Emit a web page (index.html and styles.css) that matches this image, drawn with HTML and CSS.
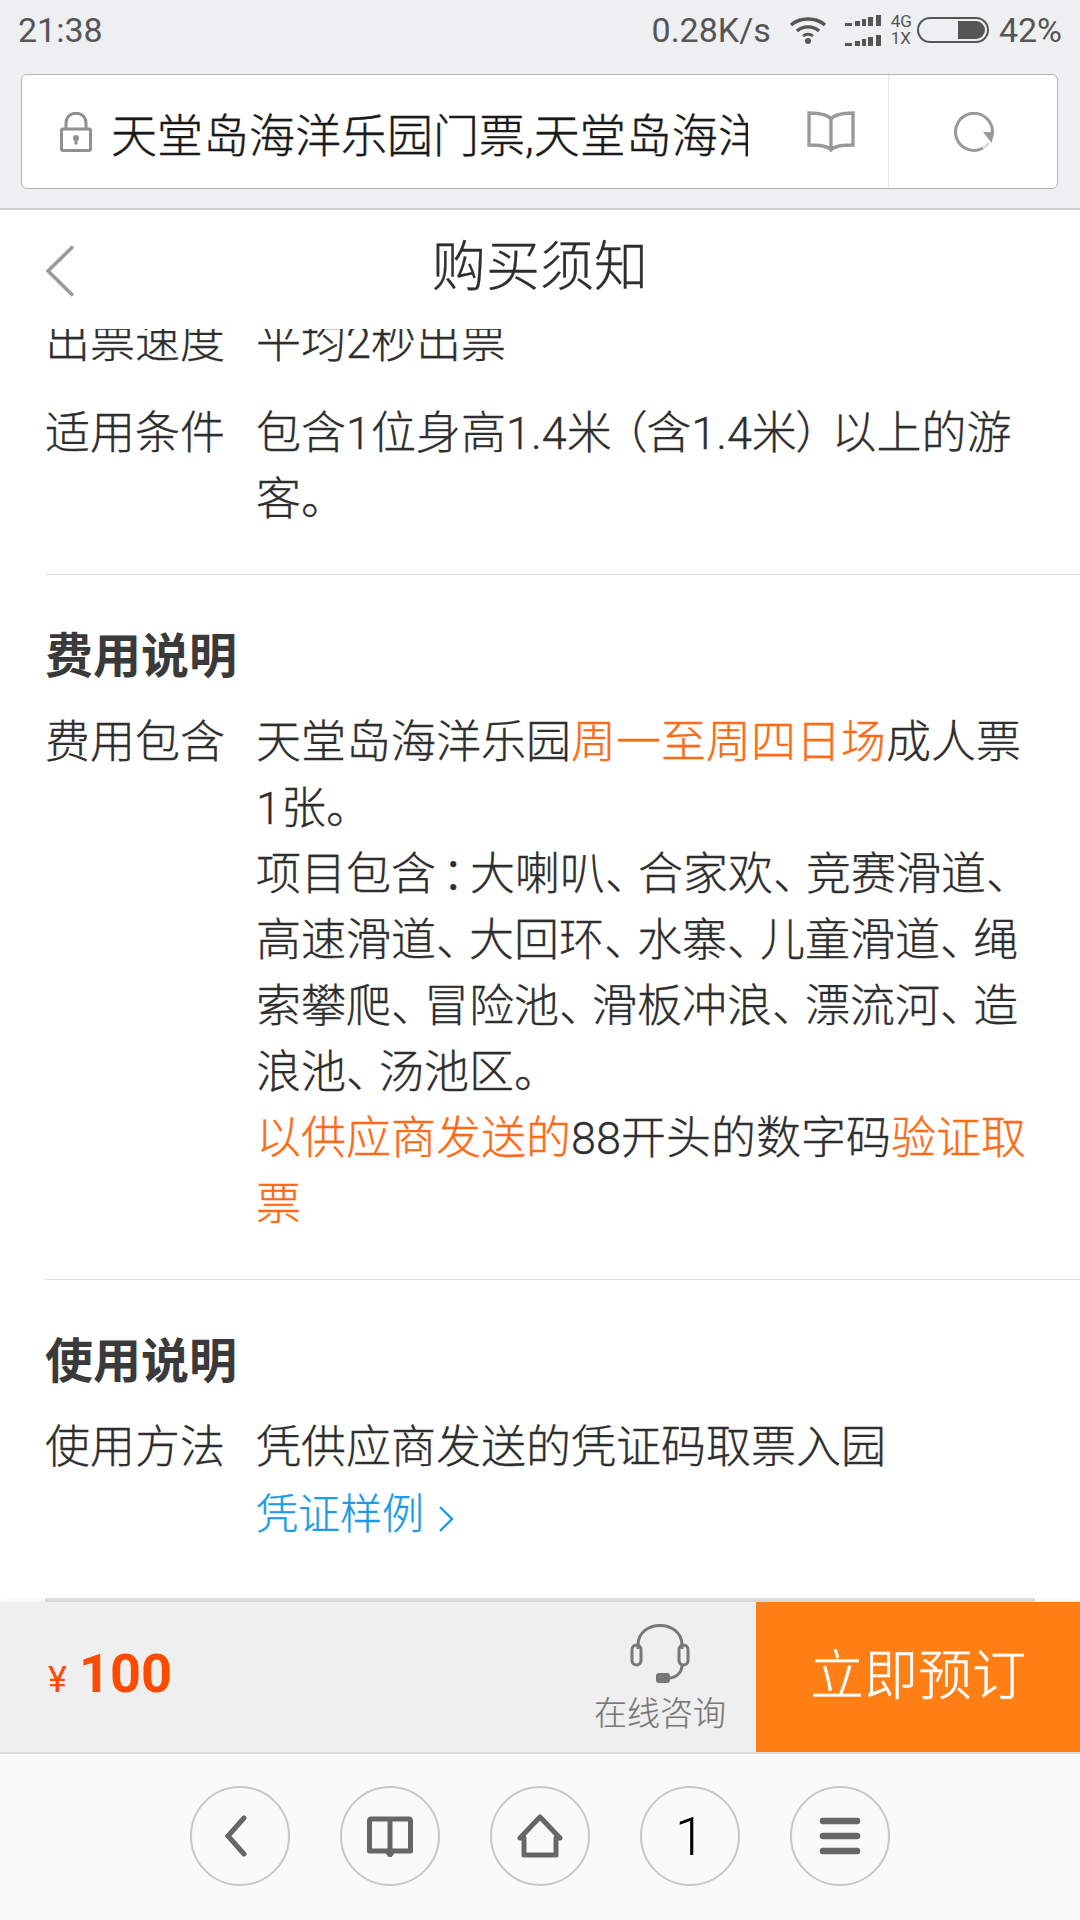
FILE: index.html
```html
<!DOCTYPE html>
<html lang="zh-CN">
<head>
  <meta charset="UTF-8" />
  <meta name="viewport" content="width=device-width, initial-scale=1.0" />
  <title>购买须知</title>
  <link rel="stylesheet" href="styles.css">
</head>
<body>
  <div class="page">
    <div class="statusbar">
      <span class="time">21:38</span>
      <div class="status-right">
        <span class="speed">0.28K/s</span>
        <svg class="wifi" width="38" height="28" viewBox="0 0 38 28">
          <path d="M2 9 C11 1 27 1 36 9" fill="none" stroke="#555" stroke-width="3.4"/>
          <path d="M8 15 C14 9.500 24 9.500 30 15" fill="none" stroke="#555" stroke-width="3.400"/>
          <path d="M14 20 C17 18 21 18 24 20" fill="none" stroke="#555" stroke-width="3"/>
          <circle cx="19" cy="25" r="3" fill="#555"/>
        </svg>
        <div class="signals">
          <svg width="37" height="11" viewBox="0 0 37 11"><path d="M0 8h7v3H0zM10 6h5v5h-5zM17 4h4v7h-4zM23 2h5v9h-5zM31 0h5v11h-5z" fill="#555"/></svg>
          <svg width="37" height="11" viewBox="0 0 37 11"><path d="M0 8h7v3H0zM10 6h5v5h-5zM17 4h4v7h-4zM23 2h5v9h-5zM31 0h5v11h-5z" fill="#555"/></svg>
        </div>
        <div class="net"><span>4G</span><span>1X</span></div>
        <div class="battery"><div class="battery-level"></div></div>
        <span class="percent">42%</span>
      </div>
    </div>

    <div class="toolbar">
      <div class="urlbar">
        <svg class="lock" width="32" height="40" viewBox="0 0 32 40">
          <path d="M6 17 V11 C6 -2 26 -2 26 11 V17" fill="none" stroke="#909090" stroke-width="3"/>
          <rect x="1.500" y="17" width="29" height="21.500" rx="1.500" fill="none" stroke="#909090" stroke-width="3"/>
          <circle cx="16" cy="26" r="3" fill="#909090"/>
          <rect x="14.500" y="26" width="3" height="6.500" fill="#909090"/>
        </svg>
        <div class="url-text">天堂岛海洋乐园门票,天堂岛海洋乐园</div>
        <svg class="book" width="48" height="41" viewBox="0 0 48 41">
          <path d="M2 2 C10 2 20 3 24 8 C28 3 38 2 46 2 V34 C38 34 28 34 24 39 C20 34 10 34 2 34 Z M24 8 V39" fill="none" stroke="#999" stroke-width="3.400"/>
        </svg>
        <div class="url-reload">
          <svg width="42" height="40" viewBox="0 0 42 40">
            <path d="M39.500 20 A18.500 18.500 0 1 0 30 36" fill="none" stroke="#999" stroke-width="3"/>
            <path d="M30 36 A18.500 18.500 0 0 0 36 31" fill="none" stroke="#ddd" stroke-width="3"/>
            <path d="M30 20 H41.500 L38.500 31 Z" fill="#999"/>
          </svg>
        </div>
      </div>
    </div>

    <div class="header">
      <svg class="back" width="30" height="52" viewBox="0 0 30 52">
        <path d="M28 1.500 L3 26 L28 50.500" fill="none" stroke="#999" stroke-width="3.500"/>
      </svg>
      <h1>购买须知</h1>
    </div>

    <div class="content">
      <div class="content-inner">
        <div class="row">
          <div class="label">出票速度</div>
          <div class="value">平均2秒出票</div>
        </div>
        <div class="row">
          <div class="label">适用条件</div>
          <div class="value">包含1位身高1.4米<span class="lp">（</span>含1.4米<span class="rp">）</span>以上的游<br>客。</div>
        </div>

        <div class="section">
          <h2>费用说明</h2>
          <div class="row">
            <div class="label">费用包含</div>
            <div class="value">天堂岛海洋乐园<span class="hl">周一至周四日场</span>成人票<br>1张。<br>项目包含<span class="colon">：</span>大喇叭<span class="dun">、</span>合家欢<span class="dun">、</span>竞赛滑道<span class="dun">、</span><br>高速滑道<span class="dun">、</span>大回环<span class="dun">、</span>水寨<span class="dun">、</span>儿童滑道<span class="dun">、</span>绳<br>索攀爬<span class="dun">、</span>冒险池<span class="dun">、</span>滑板冲浪<span class="dun">、</span>漂流河<span class="dun">、</span>造<br>浪池<span class="dun">、</span>汤池区。<br><span class="hl">以供应商发送的</span>88开头的数字码<span class="hl">验证取<br>票</span></div>
          </div>
        </div>

        <div class="section">
          <h2>使用说明</h2>
          <div class="row">
            <div class="label">使用方法</div>
            <div class="value">凭供应商发送的凭证码取票入园<br>
              <span class="link">凭证样例<svg width="16" height="28" viewBox="0 0 16 28"><path d="M2 2 L14 14 L2 26" fill="none" stroke="#1e9be6" stroke-width="2.400"/></svg></span>
            </div>
          </div>
        </div>

        <div class="next-section"></div>
      </div>
    </div>

    <div class="buybar">
      <div class="price"><span class="yen">¥</span><span class="amount">100</span></div>
      <div class="consult">
        <svg width="60" height="60" viewBox="0 0 60 60">
          <path d="M8 26 V22 C8 -4 52 -4 52 22 V26" fill="none" stroke="#777" stroke-width="3"/>
          <rect x="2" y="22" width="9" height="20" rx="4.500" fill="none" stroke="#777" stroke-width="3"/>
          <rect x="49" y="22" width="9" height="20" rx="4.500" fill="none" stroke="#777" stroke-width="3"/>
          <path d="M52 42 C52 50 46 55 38 55" fill="none" stroke="#777" stroke-width="3"/>
          <rect x="26" y="50" width="14" height="10" rx="3" fill="#777"/>
        </svg>
        <span>在线咨询</span>
      </div>
      <div class="buy-btn">立即预订</div>
    </div>

    <div class="navbar">
      <div class="nav-btn">
        <svg class="nav-back" width="24" height="42" viewBox="0 0 24 42"><path d="M20 3 L4 21 L20 39" fill="none" stroke="#666" stroke-width="5" stroke-linecap="round"/></svg>
      </div>
      <div class="nav-btn">
        <svg width="46" height="42" viewBox="0 0 46 42"><path d="M23 4 H4 C3 4 2.500 5 2.500 6 V36 H20 L23 40 L26 36 H43.500 V6 C43.500 5 43 4 42 4 H23 Z M23 4 V36" fill="none" stroke="#666" stroke-width="5" stroke-linejoin="round"/></svg>
      </div>
      <div class="nav-btn">
        <svg width="46" height="44" viewBox="0 0 46 44"><path d="M23 3 L3 24 H7 V41 H39 V24 H43 Z" fill="none" stroke="#666" stroke-width="5" stroke-linejoin="round"/></svg>
      </div>
      <div class="nav-btn nav-count">1</div>
      <div class="nav-btn">
        <svg width="42" height="38" viewBox="0 0 42 38"><path d="M4 4 H38 M4 19 H38 M4 34 H38" fill="none" stroke="#666" stroke-width="6.500" stroke-linecap="round"/></svg>
      </div>
    </div>
  </div>
</body>
</html>
```

FILE: styles.css
```css
* {
  box-sizing: border-box;
}
body {
  margin: 0;
  padding: 0;
  background: #fff;
  font-family: Roboto, "Noto Sans CJK SC", "Noto Sans", sans-serif;
  color: #2e2e2e;
}
.page {
  width: 1080px;
  height: 1920px;
  display: flex;
  flex-direction: column;
  overflow: hidden;
}

/* status bar */
.statusbar {
  height: 74px;
  background: #eeeff1;
  padding: 0 18px;
  display: flex;
  justify-content: space-between;
  align-items: flex-start;
  color: #555;
  font-size: 34px;
}
.time {
  line-height: 60px;
}
.status-right {
  display: flex;
  align-items: center;
  height: 60px;
}
.speed {
  margin-right: 18px;
}
.wifi {
  margin-right: 18px;
}
.signals {
  display: flex;
  flex-direction: column;
  gap: 9px;
  margin-right: 9px;
}
.signals svg {
  display: block;
}
.net {
  display: flex;
  flex-direction: column;
  font-size: 17px;
  line-height: 17px;
  margin-right: 5px;
}
.battery {
  width: 72px;
  height: 26px;
  border: 2.500px solid #555;
  border-radius: 13px;
  margin-right: 10px;
  padding: 2px;
  display: flex;
  justify-content: flex-end;
}
.battery-level {
  width: 27px;
  background: #555;
  border-radius: 0 9px 9px 0;
}

/* browser toolbar */
.toolbar {
  height: 136px;
  background: #eeeff1;
  border-bottom: 2px solid #ccc;
  padding: 0 22px 0 21px;
}
.urlbar {
  height: 115px;
  background: #fff;
  border: 1px solid #b5b5b5;
  border-radius: 6px;
  display: flex;
  align-items: center;
  padding-left: 38px;
}
.lock {
  margin-right: 19px;
  flex: none;
}
.url-text {
  width: 637px;
  font-size: 46px;
  font-weight: 300;
  -webkit-text-stroke: 0.4px #1a1a1a;
  color: #1a1a1a;
  white-space: nowrap;
  overflow: hidden;
  margin-right: 59px;
  flex: none;
}
.book {
  flex: none;
}
.url-reload {
  height: 100%;
  flex: 1;
  margin-left: 33px;
  border-left: 1px solid #e6e6e6;
  padding-left: 2px;
  display: flex;
  align-items: center;
  justify-content: center;
}

/* page header */
.header {
  height: 119px;
  background: #fff;
  position: relative;
  display: flex;
  align-items: center;
  justify-content: center;
  padding-bottom: 14px;
  flex: none;
  z-index: 1;
}
.header h1 {
  margin: 0;
  font-size: 54px;
  font-weight: 300;
  -webkit-text-stroke: 0.3px;
}
.back {
  position: absolute;
  left: 45px;
  top: 35px;
}

/* content */
.content {
  flex: 1;
  min-height: 0;
  overflow: hidden;
}
.content-inner {
  margin-top: -19px;
  padding-left: 45px;
}
.row {
  display: flex;
  font-size: 45px;
  font-weight: 300;
  -webkit-text-stroke: 0.3px;
  line-height: 66px;
  margin-bottom: 25px;
}
.label {
  width: 211px;
  flex: none;
  white-space: nowrap;
}
.value {
  white-space: nowrap;
}
.dun {
  letter-spacing: -12px;
}
.colon {
  margin-left: 6px;
  letter-spacing: -17px;
}
.lp {
  font-feature-settings: "palt" 1;
  padding-left: 12px;
}
.rp {
  font-feature-settings: "palt" 1;
  padding-right: 12px;
}
.hl {
  color: #ff6a13;
}
.link {
  color: #1e9be6;
  font-size: 42px;
}
.link svg {
  margin-left: 14px;
  vertical-align: -4px;
}
.section {
  border-top: 1px solid #ddd;
  padding-top: 49px;
  margin-top: 41px;
}
.section h2 {
  margin: 0 0 20px;
  font-size: 48px;
  line-height: 66px;
  font-weight: 700;
  color: #3a3a3a;
  -webkit-text-stroke: 0;
}
.next-section {
  width: 990px;
  height: 40px;
  margin-top: 50px;
  background: #e0e0e0;
}

/* buy bar */
.buybar {
  height: 150px;
  flex: none;
  display: flex;
  align-items: stretch;
  background: #efefef;
  box-shadow: 0 -2px 4px rgba(0, 0, 0, 0.05);
  position: relative;
}
.price {
  flex: 1;
  display: flex;
  align-items: baseline;
  padding: 40px 0 0 48px;
  color: #ff4a00;
}
.yen {
  font-size: 36px;
  margin-right: 12px;
}
.amount {
  font-size: 54px;
  font-weight: 700;
}
.consult {
  width: 130px;
  margin-right: 31px;
  display: flex;
  flex-direction: column;
  align-items: center;
  padding-top: 21px;
  color: #777;
  font-size: 33px;
  font-weight: 300;
  -webkit-text-stroke: 0.2px;
  line-height: 44px;
  white-space: nowrap;
}
.consult svg {
  margin-bottom: 9px;
}
.buy-btn {
  width: 324px;
  background: #ff7f14;
  color: #fff;
  font-size: 54px;
  font-weight: 300;
  -webkit-text-stroke: 0.4px;
  display: flex;
  align-items: center;
  justify-content: center;
  padding-bottom: 12px;
}

/* bottom nav */
.navbar {
  height: 168px;
  flex: none;
  background: #fafafa;
  border-top: 2px solid #ddd;
  display: flex;
  justify-content: center;
  align-items: center;
  gap: 50px;
  padding: 0 0 2px;
}
.nav-btn {
  width: 100px;
  height: 100px;
  border: 2px solid #c8c8c8;
  border-radius: 50%;
  display: flex;
  align-items: center;
  justify-content: center;
}
.nav-back {
  margin-right: 8px;
}
.nav-count {
  font-size: 54px;
  font-weight: 300;
  color: #000;
}
```
